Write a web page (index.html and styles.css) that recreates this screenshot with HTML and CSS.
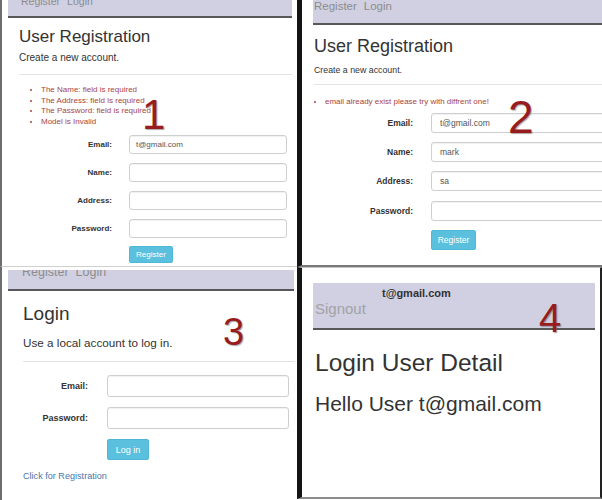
FILE: index.html
```html
<!DOCTYPE html>
<html lang="en">
<head>
  <meta charset="UTF-8">
  <title>Registration and login</title>
  <link rel="stylesheet" href="styles.css">
</head>
<body>

  <div class="collage">

    <section class="shot shot-1">
      <nav class="topbar"><div class="links"><span>Register</span><span>Login</span></div></nav>
      <div class="content">
        <h2 class="title">User Registration</h2>
        <p class="lead">Create a new account.</p>
        <hr>
        <ul class="errors">
          <li>The Name: field is required</li>
          <li>The Address: field is required</li>
          <li>The Password: field is required</li>
          <li>Model is Invalid</li>
        </ul>
        <form class="form">
          <label>Email:</label><input type="text" value="t@gmail.com">
          <label>Name:</label><input type="text">
          <label>Address:</label><input type="text">
          <label>Password:</label><input type="password">
          <button type="button" class="btn">Register</button>
        </form>
      </div>
      <span class="step">1</span>
    </section>

    <section class="shot shot-2">
      <nav class="topbar"><div class="links"><span>Register</span><span>Login</span></div></nav>
      <div class="content">
        <h2 class="title">User Registration</h2>
        <p class="lead">Create a new account.</p>
        <hr>
        <ul class="errors">
          <li>email already exist please try with diffrent one!</li>
        </ul>
        <form class="form">
          <label>Email:</label><input type="text" value="t@gmail.com">
          <label>Name:</label><input type="text" value="mark">
          <label>Address:</label><input type="text" value="sa">
          <label>Password:</label><input type="password">
          <button type="button" class="btn">Register</button>
        </form>
      </div>
      <span class="step">2</span>
    </section>

    <section class="shot shot-3">
      <nav class="topbar"><div class="links"><span>Register</span><span>Login</span></div></nav>
      <div class="content">
        <h2 class="title">Login</h2>
        <p class="lead">Use a local account to log in.</p>
        <hr>
        <form class="form">
          <label>Email:</label><input type="text">
          <label>Password:</label><input type="password">
          <button type="button" class="btn">Log in</button>
        </form>
        <a class="reg-link" href="#">Click for Registration</a>
      </div>
      <span class="step">3</span>
    </section>

    <section class="shot shot-4">
      <nav class="topbar">
        <div class="user">t@gmail.com</div>
        <div class="signout">Signout</div>
      </nav>
      <div class="content">
        <h1 class="title">Login User Detail</h1>
        <p class="hello">Hello User t@gmail.com</p>
      </div>
      <span class="step">4</span>
    </section>

  </div>

</body>
</html>
```

FILE: styles.css
```css
* {
  box-sizing: border-box;
}
html, body {
  margin: 0px;
  padding: 0px;
  background: #fff;
}
body {
  font-family: "Liberation Sans", Arial, sans-serif;
  color: #333;
}
.collage {
  display: grid;
  grid-template-columns: 297px 305px;
  grid-template-rows: 267px 233px;
  width: 602px;
  height: 500px;
  overflow: hidden;
}
.shot {
  position: relative;
  overflow: hidden;
  background: #fff;
}
.shot-1 {
  border-left: 2px solid #6d6d6d;
  border-bottom: 1px solid #cfcfcf;
}
.shot-2 {
  border-left: 5px solid #141414;
  border-bottom: 2px solid #7a7a7a;
}
.shot-3 {
  border-left: 2px solid #6d6d6d;
}
.shot-4 {
  border-left: 5px solid #141414;
  border-right: 2px solid #222;
  border-top: 1px solid #c4c4c4;
  border-bottom: 2px solid #8c8c8c;
  margin-bottom: 1px;
}

/* nav bars */
.topbar {
  background: #d0d0e2;
  border-bottom: 2px solid #585858;
  color: #8c8c8c;
  overflow: hidden;
}
.topbar .links {
  display: flex;
  gap: 7px;
}
.shot-1 .topbar {
  height: 18px;
  margin: 0 5px 0 6px;
  font-size: 10.5px;
  line-height: 12px;
}
.shot-1 .links {
  margin: -5px 0 0 13px;
}
.shot-2 .topbar {
  height: 25px;
  margin-left: 11px;
  font-size: 11.5px;
  line-height: 13px;
}
.shot-2 .links {
  padding-left: 1px;
}
.shot-3 .topbar {
  height: 21px;
  margin: 3px 3px 0 6px;
  font-size: 12.5px;
  line-height: 14px;
}
.shot-3 .links {
  margin: -5px 0 0 14px;
}
.shot-4 .topbar {
  height: 47px;
  margin: 15px 5px 0 11px;
  padding: 4px 0 0 2px;
}
.user {
  margin-left: 67px;
  font-size: 11px;
  line-height: 13px;
  font-weight: bold;
  color: #333;
}
.signout {
  font-size: 15px;
  line-height: 17px;
  color: #a2a2a6;
}

/* page content */
.title {
  margin: 0;
  font-weight: normal;
  color: #333;
}
.lead {
  margin: 0;
}
hr {
  margin: 0;
  border: 0;
  border-top: 1px solid #e4e4e4;
}
.errors {
  margin: 0;
  color: #a94442;
  font-size: 8px;
  line-height: 10.7px;
}
.form {
  display: grid;
  align-items: center;
}
.form label {
  text-align: right;
  font-weight: bold;
  color: #333;
}
.form input {
  border: 1px solid #cfcfcf;
  border-radius: 3px;
  box-shadow: inset 0 1px 1px rgba(0,0,0,.06);
  color: #555;
  font-family: inherit;
  padding: 0 6px;
  width: 100%;
}
.btn {
  grid-column: 2;
  justify-self: start;
  background: #5bc0de;
  border: 1px solid #4fb7d6;
  border-radius: 2px;
  color: #fff;
  font-family: inherit;
  padding: 0;
}

.shot-1 .content {
  padding: 0 5px 0 17px;
}
.shot-1 .title {
  margin-top: 9px;
  font-size: 17px;
  line-height: 20px;
}
.shot-1 .lead {
  margin-top: 5px;
  font-size: 10px;
  line-height: 12px;
}
.shot-1 hr {
  margin-top: 10px;
}
.shot-1 .errors {
  margin-top: 10px;
  padding-left: 22px;
}
.shot-1 .form {
  margin-top: 7px;
  grid-template-columns: 93px 158px;
  column-gap: 17px;
  row-gap: 9px;
  font-size: 8px;
}
.shot-1 .form input {
  height: 19px;
  font-size: 8px;
}
.shot-1 .btn {
  width: 44px;
  height: 17px;
  font-size: 8px;
  margin-top: -1px;
}

.shot-2 .content {
  padding-left: 12px;
}
.shot-2 .title {
  margin-top: 11px;
  font-size: 18px;
  line-height: 20px;
}
.shot-2 .lead {
  margin-top: 8px;
  font-size: 8.8px;
  line-height: 12px;
}
.shot-2 hr {
  margin-top: 8px;
}
.shot-2 .errors {
  margin-top: 12px;
  padding-left: 11px;
}
.shot-2 .form {
  margin-top: 5px;
  grid-template-columns: 99px 180px;
  column-gap: 18px;
  row-gap: 9.3px;
  font-size: 8.5px;
}
.shot-2 .form input {
  height: 20px;
  font-size: 8.5px;
  padding-left: 8px;
}
.shot-2 .btn {
  width: 45px;
  height: 20px;
  font-size: 8.5px;
}

.shot-3 .content {
  padding: 0 2px 0 21px;
}
.shot-3 .title {
  margin-top: 12px;
  font-size: 19px;
  line-height: 22px;
}
.shot-3 .lead {
  margin-top: 11px;
  font-size: 11.7px;
  line-height: 14px;
}
.shot-3 hr {
  margin-top: 11px;
}
.shot-3 .form {
  margin-top: 13px;
  grid-template-columns: 65px 182px;
  column-gap: 19px;
  row-gap: 10px;
  font-size: 9px;
}
.shot-3 .form input {
  height: 22px;
  font-size: 9px;
}
.shot-3 .btn {
  width: 42px;
  height: 21px;
  font-size: 9px;
}
.reg-link {
  display: block;
  margin-top: 10px;
  font-size: 9.1px;
  line-height: 12px;
  color: #4a76a8;
  text-decoration: none;
}

.shot-4 .content {
  padding-left: 13px;
}
.shot-4 .title {
  margin-top: 19px;
  font-size: 24.5px;
  line-height: 28px;
}
.hello {
  margin: 15px 0 0;
  font-size: 21px;
  line-height: 24px;
}

/* the red step numbers laid over each shot */
.step {
  position: absolute;
  line-height: 1;
  color: #981b1e;
  text-shadow: 1px 1px 1px rgba(80,80,80,.5);
}
.shot-1 .step {
  left: 140px;
  top: 94px;
  font-size: 42px;
}
.shot-2 .step {
  left: 206px;
  top: 94px;
  font-size: 46px;
}
.shot-3 .step {
  left: 221px;
  top: 46px;
  font-size: 38px;
}
.shot-4 .step {
  left: 237px;
  top: 30px;
  font-size: 40px;
}
```
